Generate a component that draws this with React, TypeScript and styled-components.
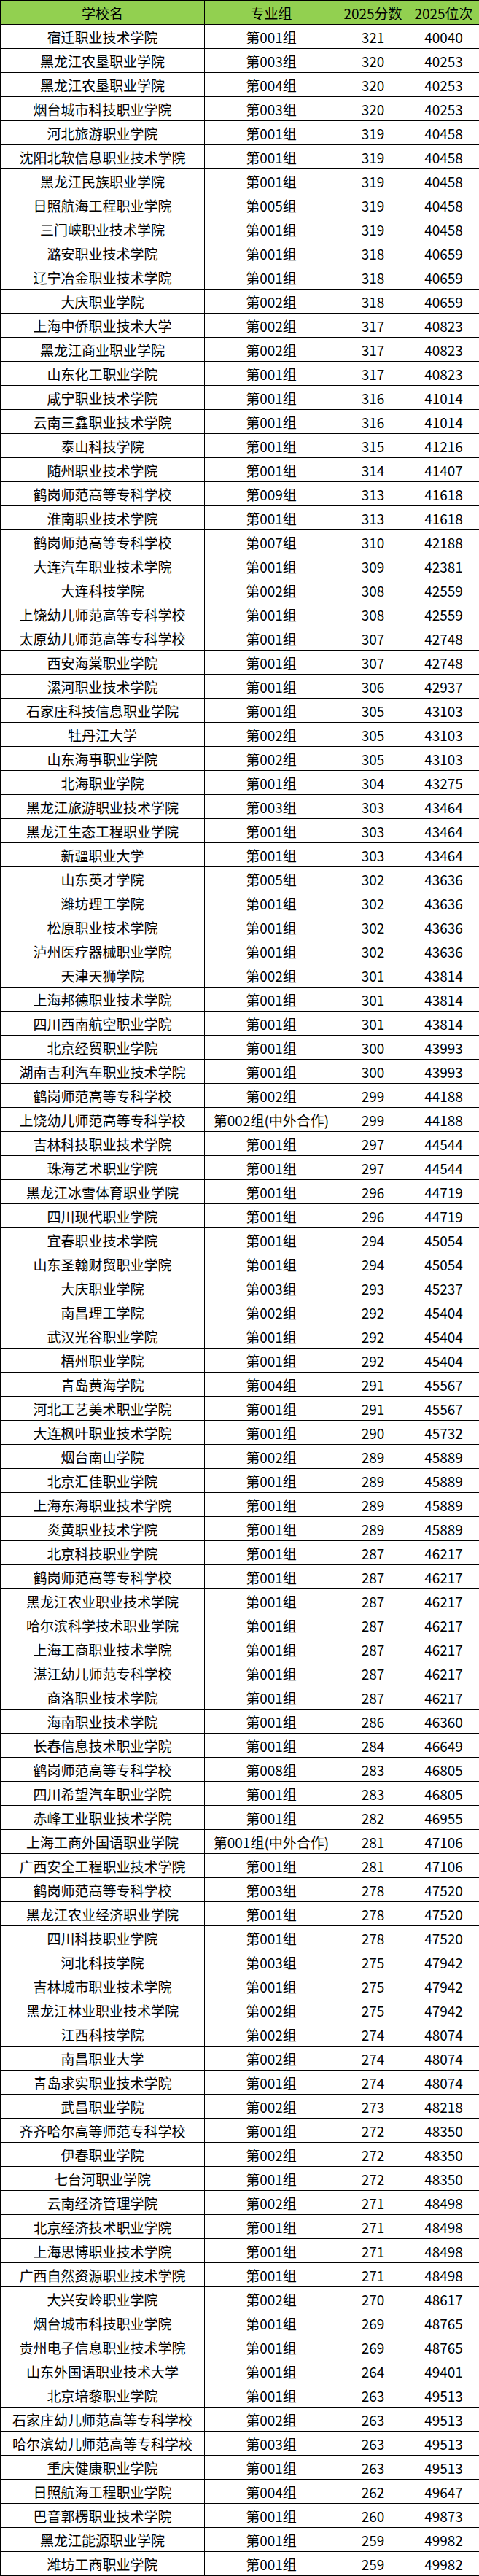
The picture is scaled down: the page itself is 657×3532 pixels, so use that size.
import React from "react";
import styled, { createGlobalStyle } from "styled-components";

const GlobalStyle = createGlobalStyle`
  html, body {
    margin: 0;
    padding: 0;
    background: #ffffff;
  }
  body {
    font-family: "Noto Sans CJK SC", "Microsoft YaHei", "Noto Sans", sans-serif;
    color: #000000;
  }
`;

const Table = styled.table`
  width: 657px;
  border-collapse: collapse;
  table-layout: fixed;
  font-family: "Noto Sans CJK SC", "Noto Sans", sans-serif;
  font-size: 19px;
  color: #000;
`;

const Col = styled.col<{ $w: number }>`
  width: ${(p) => p.$w}px;
`;

const Row = styled.tr`
  height: 33px;
`;

const HeadCell = styled.th`
  background: #92d050;
  border: 1px solid #000;
  font-weight: 400;
  text-align: center;
  vertical-align: middle;
  padding: 0;
  line-height: 31px;
  white-space: nowrap;
  overflow: hidden;
`;

const Cell = styled.td`
  border: 1px solid #000;
  text-align: center;
  vertical-align: middle;
  padding: 0;
  line-height: 31px;
  white-space: nowrap;
  overflow: hidden;
`;

type Rec = [string, string, number, number];

const raw = `宿迁职业技术学院|第001组|321|40040
黑龙江农垦职业学院|第003组|320|40253
黑龙江农垦职业学院|第004组|320|40253
烟台城市科技职业学院|第003组|320|40253
河北旅游职业学院|第001组|319|40458
沈阳北软信息职业技术学院|第001组|319|40458
黑龙江民族职业学院|第001组|319|40458
日照航海工程职业学院|第005组|319|40458
三门峡职业技术学院|第001组|319|40458
潞安职业技术学院|第001组|318|40659
辽宁冶金职业技术学院|第001组|318|40659
大庆职业学院|第002组|318|40659
上海中侨职业技术大学|第002组|317|40823
黑龙江商业职业学院|第002组|317|40823
山东化工职业学院|第001组|317|40823
咸宁职业技术学院|第001组|316|41014
云南三鑫职业技术学院|第001组|316|41014
泰山科技学院|第001组|315|41216
随州职业技术学院|第001组|314|41407
鹤岗师范高等专科学校|第009组|313|41618
淮南职业技术学院|第001组|313|41618
鹤岗师范高等专科学校|第007组|310|42188
大连汽车职业技术学院|第001组|309|42381
大连科技学院|第002组|308|42559
上饶幼儿师范高等专科学校|第001组|308|42559
太原幼儿师范高等专科学校|第001组|307|42748
西安海棠职业学院|第001组|307|42748
漯河职业技术学院|第001组|306|42937
石家庄科技信息职业学院|第001组|305|43103
牡丹江大学|第002组|305|43103
山东海事职业学院|第002组|305|43103
北海职业学院|第001组|304|43275
黑龙江旅游职业技术学院|第003组|303|43464
黑龙江生态工程职业学院|第001组|303|43464
新疆职业大学|第001组|303|43464
山东英才学院|第005组|302|43636
潍坊理工学院|第001组|302|43636
松原职业技术学院|第001组|302|43636
泸州医疗器械职业学院|第001组|302|43636
天津天狮学院|第002组|301|43814
上海邦德职业技术学院|第001组|301|43814
四川西南航空职业学院|第001组|301|43814
北京经贸职业学院|第001组|300|43993
湖南吉利汽车职业技术学院|第001组|300|43993
鹤岗师范高等专科学校|第002组|299|44188
上饶幼儿师范高等专科学校|第002组(中外合作)|299|44188
吉林科技职业技术学院|第001组|297|44544
珠海艺术职业学院|第001组|297|44544
黑龙江冰雪体育职业学院|第001组|296|44719
四川现代职业学院|第001组|296|44719
宜春职业技术学院|第001组|294|45054
山东圣翰财贸职业学院|第001组|294|45054
大庆职业学院|第003组|293|45237
南昌理工学院|第002组|292|45404
武汉光谷职业学院|第001组|292|45404
梧州职业学院|第001组|292|45404
青岛黄海学院|第004组|291|45567
河北工艺美术职业学院|第001组|291|45567
大连枫叶职业技术学院|第001组|290|45732
烟台南山学院|第002组|289|45889
北京汇佳职业学院|第001组|289|45889
上海东海职业技术学院|第001组|289|45889
炎黄职业技术学院|第001组|289|45889
北京科技职业学院|第001组|287|46217
鹤岗师范高等专科学校|第001组|287|46217
黑龙江农业职业技术学院|第001组|287|46217
哈尔滨科学技术职业学院|第001组|287|46217
上海工商职业技术学院|第001组|287|46217
湛江幼儿师范专科学校|第001组|287|46217
商洛职业技术学院|第001组|287|46217
海南职业技术学院|第001组|286|46360
长春信息技术职业学院|第001组|284|46649
鹤岗师范高等专科学校|第008组|283|46805
四川希望汽车职业学院|第001组|283|46805
赤峰工业职业技术学院|第001组|282|46955
上海工商外国语职业学院|第001组(中外合作)|281|47106
广西安全工程职业技术学院|第001组|281|47106
鹤岗师范高等专科学校|第003组|278|47520
黑龙江农业经济职业学院|第001组|278|47520
四川科技职业学院|第001组|278|47520
河北科技学院|第003组|275|47942
吉林城市职业技术学院|第001组|275|47942
黑龙江林业职业技术学院|第002组|275|47942
江西科技学院|第002组|274|48074
南昌职业大学|第002组|274|48074
青岛求实职业技术学院|第001组|274|48074
武昌职业学院|第002组|273|48218
齐齐哈尔高等师范专科学校|第001组|272|48350
伊春职业学院|第002组|272|48350
七台河职业学院|第001组|272|48350
云南经济管理学院|第002组|271|48498
北京经济技术职业学院|第001组|271|48498
上海思博职业技术学院|第001组|271|48498
广西自然资源职业技术学院|第001组|271|48498
大兴安岭职业学院|第002组|270|48617
烟台城市科技职业学院|第001组|269|48765
贵州电子信息职业技术学院|第001组|269|48765
山东外国语职业技术大学|第001组|264|49401
北京培黎职业学院|第001组|263|49513
石家庄幼儿师范高等专科学校|第002组|263|49513
哈尔滨幼儿师范高等专科学校|第003组|263|49513
重庆健康职业学院|第001组|263|49513
日照航海工程职业学院|第004组|262|49647
巴音郭楞职业技术学院|第001组|260|49873
黑龙江能源职业学院|第001组|259|49982
潍坊工商职业学院|第001组|259|49982`;

const rows: Rec[] = raw.split("\n").map((line) => {
  const [a, b, c, d] = line.split("|");
  return [a, b, Number(c), Number(d)];
});

export default function App() {
  return (
    <>
      <GlobalStyle />
      <Table>
        <colgroup>
          <Col $w={280} />
          <Col $w={183} />
          <Col $w={96} />
          <Col $w={98} />
        </colgroup>
        <thead>
          <Row>
            <HeadCell>学校名</HeadCell>
            <HeadCell>专业组</HeadCell>
            <HeadCell>2025分数</HeadCell>
            <HeadCell>2025位次</HeadCell>
          </Row>
        </thead>
        <tbody>
          {rows.map((r, i) => (
            <Row key={i}>
              <Cell>{r[0]}</Cell>
              <Cell>{r[1]}</Cell>
              <Cell>{r[2]}</Cell>
              <Cell>{r[3]}</Cell>
            </Row>
          ))}
        </tbody>
      </Table>
    </>
  );
}
